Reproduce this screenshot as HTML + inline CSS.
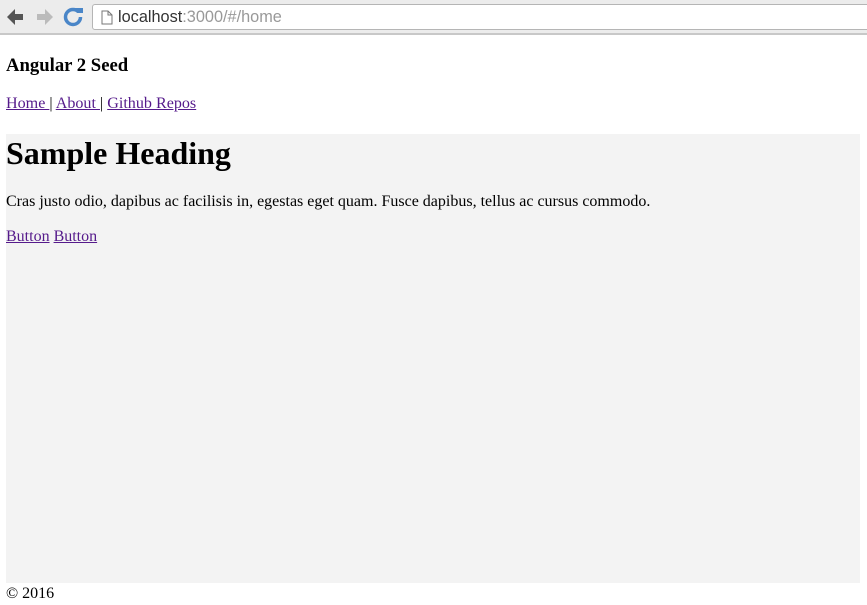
<!DOCTYPE html>
<html><head><style>
body{margin:0;width:867px;height:605px;overflow:hidden;background:#fff;font-family:"Liberation Serif",serif;position:relative}
.chrome{position:absolute;left:0;top:0;width:867px;height:33px;background:#ececec;border-bottom:2px solid #c8c8c8}
.url{position:absolute;left:92px;top:4px;width:780px;height:24px;background:#fff;border:1px solid #b5b5b5;border-radius:3px;font-family:"Liberation Sans",sans-serif;font-size:16.3px;line-height:24px}
.abs{position:absolute;white-space:nowrap}
a{color:#551a8b}
</style></head><body>
<div class="chrome">
<svg class="abs" style="left:4px;top:6px" width="84" height="22" viewBox="0 0 84 22">
<path d="M3 11 L11 3 L11 8 L19 8 L19 14 L11 14 L11 19 Z" fill="#555"/>
<path d="M49 11 L41 3 L41 8 L33 8 L33 14 L41 14 L41 19 Z" fill="#bbb"/>
<circle cx="69" cy="11" r="7.5" fill="none" stroke="#4a86c8" stroke-width="3.5"/>
<path d="M70 2 L79 2 L79 11 Z" fill="#4a86c8"/>
<rect x="71" y="7" width="8" height="4" fill="#ececec"/>
</svg>
<div class="url">
<svg class="abs" style="left:8px;top:5px" width="12" height="15" viewBox="0 0 12 15"><path d="M1 1 H7 L11 5 V14 H1 Z M7 1 V5 H11" fill="#fff" stroke="#777"/></svg>
<span class="abs" style="left:25px;top:0;color:#333">localhost<span style="color:#999">:3000/#/home</span></span>
</div>
</div>
<div class="abs" style="left:6px;top:55px;font-size:18.7px;font-weight:bold">Angular 2 Seed</div>
<div class="abs" style="left:6px;top:95px;font-size:16.1px"><a href="#">Home </a>| <a href="#">About </a>| <a href="#">Github Repos</a></div>
<div class="abs" style="left:6px;top:134px;width:854px;height:449px;background:#f3f3f3">
<div class="abs" style="left:0;top:0;font-size:32px;font-weight:bold;line-height:38px">Sample Heading</div>
<div class="abs" style="left:0;top:59px;font-size:16px">Cras justo odio, dapibus ac facilisis in, egestas eget quam. Fusce dapibus, tellus ac cursus commodo.</div>
<div class="abs" style="left:0;top:94px;font-size:16px"><a href="#">Button</a> <a href="#">Button</a></div>
</div>
<div class="abs" style="left:6px;top:585px;font-size:16px">© 2016</div>
</body></html>
